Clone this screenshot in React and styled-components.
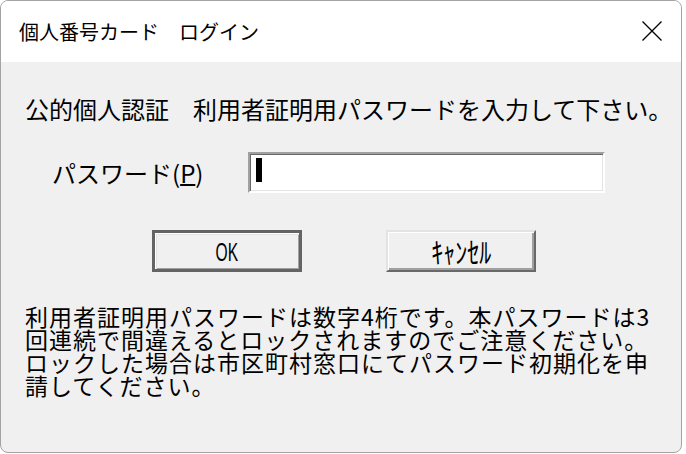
import React from "react";
import styled, { createGlobalStyle } from "styled-components";

const GlobalStyle = createGlobalStyle`
  html, body {
    margin: 0;
    padding: 0;
    background: #ffffff;
  }
  body {
    font-family: "Noto Sans CJK JP", "Noto Sans", sans-serif;
    color: #000;
  }
`;

const Window = styled.div`
  width: 682px;
  height: 453px;
  box-sizing: border-box;
  border: 1px solid #a3a3a3;
  border-radius: 8px;
  overflow: hidden;
  display: flex;
  flex-direction: column;
  background: #f0f0f0;
`;

const TitleBar = styled.div`
  height: 61px;
  flex: none;
  background: #ffffff;
  display: flex;
  align-items: center;
  justify-content: space-between;
  padding: 0 19px 0 18px;
`;

const Title = styled.span`
  font-size: 20px;
  line-height: 20px;
  white-space: pre;
  color: #000;
  margin-top: 1px;
`;

const CloseButton = styled.div`
  width: 20px;
  height: 20px;
  display: flex;
  margin-top: -2px;
`;

const Body = styled.div`
  flex: 1;
  display: flex;
  flex-direction: column;
  padding-top: 35px;
  font-size: 24px;
  line-height: 24px;
  color: #000;
`;

const Message = styled.div`
  padding-left: 24px;
  white-space: pre;
`;

const PasswordRow = styled.div`
  margin-top: 31px;
  display: flex;
  align-items: center;
`;

const Label = styled.label`
  width: 196px;
  margin-left: 51px;
  white-space: pre;
`;

const Underline = styled.span`
  text-decoration: underline;
  text-decoration-thickness: 2px;
  text-underline-offset: 1px;
`;

const Field = styled.div`
  width: 357px;
  height: 41px;
  box-sizing: border-box;
  background: #ffffff;
  border-top: 2px solid #a0a0a0;
  border-left: 2px solid #a0a0a0;
  border-bottom: 2px solid #ffffff;
  border-right: 2px solid #ffffff;
  box-shadow: inset 1px 1px 0 #696969, inset -1px -1px 0 #e3e3e3;
  padding: 4px 0 0 6px;
  display: flex;
  align-items: flex-start;
`;

const Caret = styled.span`
  width: 6px;
  height: 24px;
  background: #000;
`;

const ButtonRow = styled.div`
  margin-top: 37px;
  padding-left: 151px;
  display: flex;
  gap: 84px;
`;

const Button = styled.div`
  width: 150px;
  height: 42px;
  box-sizing: border-box;
  background: #f0f0f0;
  display: flex;
  align-items: center;
  justify-content: center;
  font-size: 24px;
  line-height: 24px;
  ${(p) =>
    p.$default
      ? `
    border: 3px solid #646464;
    box-shadow: inset 1px 1px 0 #ffffff, inset 2px 2px 0 #e3e3e3, inset -1px -1px 0 #a0a0a0;
  `
      : `
    border-top: 2px solid #e3e3e3;
    border-left: 2px solid #e3e3e3;
    border-right: 2px solid #696969;
    border-bottom: 2px solid #696969;
    box-shadow: inset 1px 1px 0 #ffffff, inset -1px -1px 0 #a0a0a0, inset -2px -2px 0 #a0a0a0;
  `}
`;

const Caption = styled.span`
  display: inline-block;
  font-family: ${(p) => (p.$latin ? `"Liberation Sans", sans-serif` : `"Noto Sans CJK JP", sans-serif`)};
  font-size: ${(p) => (p.$latin ? "26px" : "29px")};
  line-height: 28px;
  transform: ${(p) => (p.$latin ? "scaleX(0.6)" : "scaleX(0.83)")};
  margin-top: ${(p) => (p.$latin ? "1px" : "0")};
`;

const Notice = styled.div`
  margin-top: 33px;
  padding-left: 24px;
  font-size: 23px;
  letter-spacing: 1px;
  line-height: 23px;
  white-space: nowrap;
`;

export default function App() {
  return (
    <>
      <GlobalStyle />
      <Window>
        <TitleBar>
          <Title>個人番号カード　ログイン</Title>
          <CloseButton>
            <svg width="20" height="20" viewBox="0 0 20 20">
              <path d="M0.5 0.5 L19.5 19.5 M19.5 0.5 L0.5 19.5" stroke="#000" strokeWidth="1.3" fill="none" />
            </svg>
          </CloseButton>
        </TitleBar>
        <Body>
          <Message>公的個人認証　利用者証明用パスワードを入力して下さい。</Message>
          <PasswordRow>
            <Label>
              パスワード(<Underline>P</Underline>)
            </Label>
            <Field>
              <Caret />
            </Field>
          </PasswordRow>
          <ButtonRow>
            <Button $default>
              <Caption $latin>OK</Caption>
            </Button>
            <Button>
              <Caption>ｷｬﾝｾﾙ</Caption>
            </Button>
          </ButtonRow>
          <Notice>
            利用者証明用パスワードは数字4桁です。本パスワードは3
            <br />
            回連続で間違えるとロックされますのでご注意ください。
            <br />
            ロックした場合は市区町村窓口にてパスワード初期化を申
            <br />
            請してください。
          </Notice>
        </Body>
      </Window>
    </>
  );
}
